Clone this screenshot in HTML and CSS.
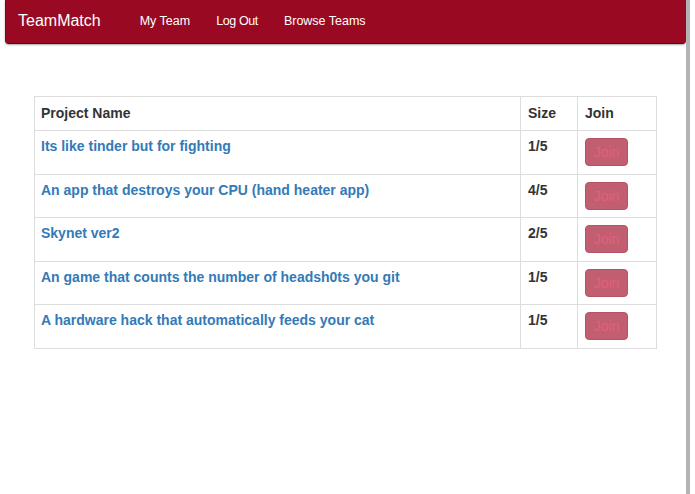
FILE: index.html
```html
<!DOCTYPE html>
<html>
<head>
<meta charset="utf-8">
<link rel="stylesheet" href="styles.css">
</head>
<body>
<div class="page">
  <div class="main">
    <nav class="navbar">
      <span class="brand">TeamMatch</span>
      <a class="nav-link" href="#">My Team</a>
      <a class="nav-link tight" href="#">Log Out</a>
      <a class="nav-link" href="#">Browse Teams</a>
    </nav>
    <div class="content">
      <table class="teams">
        <thead>
          <tr><th class="c-name">Project Name</th><th class="c-size">Size</th><th class="c-join">Join</th></tr>
        </thead>
        <tbody>
          <tr><td class="name"><a href="#">Its like tinder but for fighting</a></td><td class="size">1/5</td><td><button class="join">Join</button></td></tr>
          <tr><td class="name"><a href="#">An app that destroys your CPU (hand heater app)</a></td><td class="size">4/5</td><td><button class="join">Join</button></td></tr>
          <tr><td class="name"><a href="#">Skynet ver2</a></td><td class="size">2/5</td><td><button class="join">Join</button></td></tr>
          <tr><td class="name"><a href="#">An game that counts the number of headsh0ts you git</a></td><td class="size">1/5</td><td><button class="join">Join</button></td></tr>
          <tr><td class="name"><a href="#">A hardware hack that automatically feeds your cat</a></td><td class="size">1/5</td><td><button class="join">Join</button></td></tr>
        </tbody>
      </table>
    </div>
  </div>
  <div class="edge"></div>
</div>
</body>
</html>
```
FILE: styles.css
```css
html, body {
  margin: 0;
  padding: 0;
  background: #fff;
}
body {
  font-family: "Liberation Sans", Arial, sans-serif;
  color: #333;
}
.page {
  display: flex;
  height: 494px;
  overflow: hidden;
}
.main {
  width: 686px;
  flex: none;
}
.edge {
  width: 4px;
  flex: none;
  background: #b4b4b4;
}
.navbar {
  margin-left: 5px;
  height: 44px;
  background: #990a22;
  border-bottom: 1px solid #5e0614;
  border-left: 1px solid #7a0818;
  border-radius: 0 0 4px 4px;
  box-shadow: 0 1px 2px rgba(0,0,0,0.35);
  display: flex;
  align-items: center;
  box-sizing: border-box;
  padding-bottom: 1px;
}
.brand {
  color: #fff;
  font-size: 16px;
  margin-left: 12px;
  margin-right: 39px;
}
.nav-link {
  color: #fff;
  text-decoration: none;
  font-size: 12.5px;
  margin-right: 26px;
}
.nav-link.tight {
  letter-spacing: -0.4px;
}
.content {
  padding: 52px 29px 0 34px;
}
.teams {
  width: 623px;
  border-collapse: collapse;
  border: 1px solid #ddd;
  font-size: 14px;
}
.teams th, .teams td {
  border: 1px solid #ddd;
  text-align: left;
  vertical-align: top;
}
.teams th {
  padding: 8px 7px;
  line-height: 17px;
  font-weight: bold;
  color: #333;
}
.teams th.c-name, .teams td.name {
  padding-left: 6px;
}
.teams td {
  padding: 8px 7px 6.6px;
  line-height: 15px;
  font-weight: bold;
}
.teams td a {
  color: #337ab7;
  text-decoration: none;
}
.c-size { width: 42px; }
.c-join { width: 64px; }
.size { color: #333; }
.join {
  display: block;
  width: 43px;
  height: 28px;
  margin-top: -1px;
  margin-bottom: 1px;
  padding: 0;
  background: #c15f71;
  border: 1px solid #b55466;
  border-radius: 4px;
  color: #e2607a;
  font-family: "Liberation Sans", Arial, sans-serif;
  font-size: 14px;
  font-weight: normal;
}
```
